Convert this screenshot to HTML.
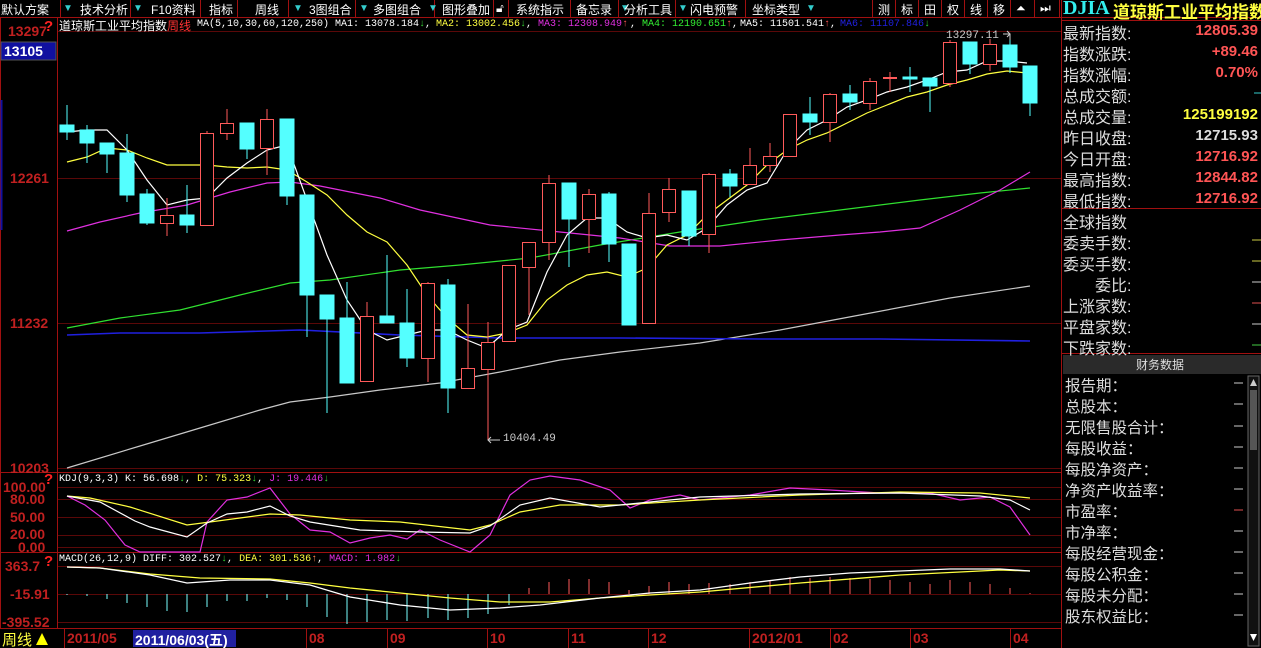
<!DOCTYPE html>
<html><head><meta charset="utf-8"><style>
html,body{margin:0;padding:0;background:#000;width:1261px;height:648px;overflow:hidden;position:relative;font-family:"Liberation Sans","Noto Sans CJK SC",sans-serif}
.a{position:absolute;white-space:nowrap}
.tb{font-size:12px;color:#fff;top:1px}
.tri{color:#3cc;font-size:10px;top:3px}
.rp{font-size:16px;color:#ddd;left:1063px}
.rv{font-size:15px;font-weight:bold;right:3px;text-align:right}
.fl{font-size:15.5px;color:#ddd;left:1065px}
.ax{font-size:14px;color:#c02020;font-weight:bold}
.mono{font-family:"Liberation Mono","Noto Sans CJK SC",monospace;font-size:10px}
</style></head><body>
<svg class="a" style="left:0;top:0" width="1261" height="648">
<!-- toolbar separators -->
<g stroke="#a01010" stroke-width="1">
<line x1="0" y1="17.5" x2="1261" y2="17.5"/>
<line x1="60.5" y1="0" x2="60.5" y2="17"/><line x1="130.5" y1="0" x2="130.5" y2="17"/><line x1="200.5" y1="0" x2="200.5" y2="17"/><line x1="237.5" y1="0" x2="237.5" y2="17"/><line x1="288.5" y1="0" x2="288.5" y2="17"/><line x1="355.5" y1="0" x2="355.5" y2="17"/><line x1="434.5" y1="0" x2="434.5" y2="17"/><line x1="493.5" y1="0" x2="493.5" y2="17"/><line x1="508.5" y1="0" x2="508.5" y2="17"/><line x1="570.5" y1="0" x2="570.5" y2="17"/><line x1="618.5" y1="0" x2="618.5" y2="17"/><line x1="675.5" y1="0" x2="675.5" y2="17"/><line x1="745.5" y1="0" x2="745.5" y2="17"/><line x1="872.5" y1="0" x2="872.5" y2="17"/><line x1="895.5" y1="0" x2="895.5" y2="17"/><line x1="918.5" y1="0" x2="918.5" y2="17"/><line x1="941.5" y1="0" x2="941.5" y2="17"/><line x1="964.5" y1="0" x2="964.5" y2="17"/><line x1="987.5" y1="0" x2="987.5" y2="17"/><line x1="1010.5" y1="0" x2="1010.5" y2="17"/><line x1="1034.5" y1="0" x2="1034.5" y2="17"/><line x1="1059.5" y1="0" x2="1059.5" y2="17"/>
</g>
<!-- frames -->
<g stroke="#a01010" fill="none">
<line x1="57.5" y1="18" x2="57.5" y2="628"/>
<line x1="0" y1="472.5" x2="1061" y2="472.5"/>
<line x1="0" y1="552.5" x2="1061" y2="552.5"/>
<line x1="0" y1="628.5" x2="1061" y2="628.5"/>
<line x1="1061.5" y1="0" x2="1061.5" y2="648"/>
<line x1="1062" y1="20.5" x2="1261" y2="20.5"/>
<line x1="1062" y1="208.5" x2="1261" y2="208.5"/>
<line x1="1062" y1="353.5" x2="1261" y2="353.5"/>
<line x1="0.5" y1="18" x2="0.5" y2="628"/>
</g>
<g stroke="#5a0808">
<line x1="58" y1="31.5" x2="1061" y2="31.5"/>
<line x1="58" y1="178.5" x2="1061" y2="178.5"/>
<line x1="58" y1="323.5" x2="1061" y2="323.5"/>
<line x1="58" y1="468.5" x2="1061" y2="468.5"/>
<line x1="58" y1="487.5" x2="1061" y2="487.5"/><line x1="58" y1="499.5" x2="1061" y2="499.5"/><line x1="58" y1="517.5" x2="1061" y2="517.5"/><line x1="58" y1="535.5" x2="1061" y2="535.5"/><line x1="58" y1="547.5" x2="1061" y2="547.5"/>
<line x1="58" y1="566.5" x2="1061" y2="566.5"/><line x1="58" y1="594.5" x2="1061" y2="594.5"/><line x1="58" y1="622.5" x2="1061" y2="622.5"/>
</g>
<rect x="1" y="42" width="55" height="18" fill="#1010a0" stroke="#555"/>
<line x1="1.5" y1="100" x2="1.5" y2="230" stroke="#1010a0" stroke-width="2"/>
<!-- MA lines -->
<g fill="none" stroke-width="1.2">
<polyline stroke="#c8c8c8" points="67,468 140,446 200,428 260,410 290,402 330,397 380,390 440,383 500,372 560,360 620,352 700,343 780,330 860,315 950,298 1030,286"/>
<polyline stroke="#2020e0" stroke-width="1.6" points="67,335 120,333 200,333 300,330 400,335 500,338 620,338 760,339 880,339 1030,341"/>
<polyline stroke="#30e030" points="67,328 120,318 180,310 240,295 290,283 330,280 400,270 460,265 530,258 600,245 680,232 760,220 840,210 920,200 980,193 1030,188"/>
<polyline stroke="#e030e0" points="67,231 100,222 140,213 187,205 230,192 267,183 290,182 320,186 380,198 420,210 490,225 560,232 620,238 670,246 720,246 780,240 840,235 880,232 920,228 960,210 1000,190 1030,172"/>
<polyline stroke="#ffff40" points="67,162 87,157 107,148 127,150 147,158 167,165 187,165 207,165 227,167 247,168 267,167 287,170 307,182 327,195 347,215 367,232 387,242 407,265 427,295 447,318 467,335 487,337 507,333 527,325 547,300 567,285 587,275 607,272 627,277 647,268 667,245 687,235 707,215 727,200 747,185 767,165 787,150 807,140 827,133 847,123 867,113 887,105 907,97 927,92 947,85 967,80 987,74 1007,71 1027,73"/>
<polyline stroke="#fff" points="67,132 87,130 107,130 127,150 147,180 167,205 187,200 207,198 227,178 247,163 267,150 287,145 307,200 327,255 347,300 367,330 387,340 407,335 427,330 447,330 467,340 487,348 507,330 527,322 547,272 567,235 587,218 607,218 627,232 647,238 667,235 687,240 707,228 727,205 747,190 767,183 787,150 807,130 827,120 847,107 867,100 887,92 907,87 927,80 947,72 967,70 987,61 1007,61 1027,63"/>
</g>
<!-- candles -->
<g id="c" fill="#54ffff" stroke="#54ffff">
<line x1="67" y1="105" x2="67" y2="140"/><rect x="60" y="125" width="14" height="7"/>
<line x1="87" y1="125" x2="87" y2="163"/><rect x="80" y="130" width="14" height="13"/>
<line x1="107" y1="143" x2="107" y2="173"/><rect x="100" y="143" width="14" height="11"/>
<line x1="127" y1="134" x2="127" y2="202"/><rect x="120" y="153" width="14" height="42"/>
<line x1="147" y1="189" x2="147" y2="225"/><rect x="140" y="194" width="14" height="29"/>
<line x1="187" y1="185" x2="187" y2="233"/><rect x="180" y="215" width="14" height="10"/>
<line x1="247" y1="123" x2="247" y2="159"/><rect x="240" y="123" width="14" height="26"/>
<line x1="287" y1="119" x2="287" y2="205"/><rect x="280" y="119" width="14" height="77"/>
<line x1="307" y1="195" x2="307" y2="337"/><rect x="300" y="195" width="14" height="100"/>
<line x1="327" y1="295" x2="327" y2="413"/><rect x="320" y="295" width="14" height="24"/>
<line x1="347" y1="282" x2="347" y2="383"/><rect x="340" y="318" width="14" height="65"/>
<line x1="387" y1="255" x2="387" y2="323"/><rect x="380" y="316" width="14" height="7"/>
<line x1="407" y1="289" x2="407" y2="367"/><rect x="400" y="323" width="14" height="35"/>
<line x1="448" y1="279" x2="448" y2="413"/><rect x="441" y="285" width="14" height="103"/>
<line x1="569" y1="183" x2="569" y2="267"/><rect x="562" y="183" width="14" height="36"/>
<line x1="609" y1="192" x2="609" y2="262"/><rect x="602" y="194" width="14" height="50"/>
<rect x="622" y="244" width="14" height="81"/>
<line x1="689" y1="191" x2="689" y2="246"/><rect x="682" y="191" width="14" height="45"/>
<line x1="730" y1="169" x2="730" y2="197"/><rect x="723" y="174" width="14" height="12"/>
<line x1="810" y1="97" x2="810" y2="135"/><rect x="803" y="114" width="14" height="8"/>
<line x1="850" y1="85" x2="850" y2="110"/><rect x="843" y="94" width="14" height="8"/>
<line x1="910" y1="67" x2="910" y2="92"/><rect x="903" y="77" width="14" height="2"/>
<line x1="930" y1="78" x2="930" y2="112"/><rect x="923" y="78" width="14" height="8"/>
<line x1="970" y1="42" x2="970" y2="74"/><rect x="963" y="42" width="14" height="22"/>
<line x1="1010" y1="35" x2="1010" y2="73"/><rect x="1003" y="45" width="14" height="22"/>
<line x1="1030" y1="66" x2="1030" y2="116"/><rect x="1023" y="66" width="14" height="37"/>
</g>
<g fill="#000" stroke="#ff5a5a">
<line x1="167" y1="198" x2="167" y2="236"/><rect x="160.5" y="215.5" width="13" height="8"/>
<line x1="207" y1="131" x2="207" y2="226"/><rect x="200.5" y="133.5" width="13" height="92"/>
<line x1="227" y1="109" x2="227" y2="140"/><rect x="220.5" y="123.5" width="13" height="10"/>
<line x1="267" y1="109" x2="267" y2="175"/><rect x="260.5" y="119.5" width="13" height="29"/>
<line x1="367" y1="302" x2="367" y2="382"/><rect x="360.5" y="316.5" width="13" height="65"/>
<line x1="428" y1="282" x2="428" y2="382"/><rect x="421.5" y="283.5" width="13" height="75"/>
<line x1="468" y1="304" x2="468" y2="388"/><rect x="461.5" y="368.5" width="13" height="20"/>
<line x1="488" y1="322" x2="488" y2="440"/><rect x="481.5" y="342.5" width="13" height="27"/>
<rect x="502.5" y="265.5" width="13" height="76"/>
<line x1="529" y1="242" x2="529" y2="315"/><rect x="522.5" y="242.5" width="13" height="25"/>
<line x1="549" y1="175" x2="549" y2="260"/><rect x="542.5" y="183.5" width="13" height="59"/>
<line x1="589" y1="189" x2="589" y2="253"/><rect x="582.5" y="194.5" width="13" height="25"/>
<line x1="649" y1="193" x2="649" y2="323"/><rect x="642.5" y="213.5" width="13" height="110"/>
<line x1="669" y1="178" x2="669" y2="222"/><rect x="662.5" y="189.5" width="13" height="23"/>
<line x1="709" y1="173" x2="709" y2="253"/><rect x="702.5" y="174.5" width="13" height="60"/>
<line x1="750" y1="148" x2="750" y2="184"/><rect x="743.5" y="165.5" width="13" height="19"/>
<line x1="770" y1="143" x2="770" y2="172"/><rect x="763.5" y="156.5" width="13" height="9"/>
<rect x="783.5" y="114.5" width="13" height="42"/>
<line x1="830" y1="93" x2="830" y2="142"/><rect x="823.5" y="94.5" width="13" height="28"/>
<line x1="870" y1="78" x2="870" y2="110"/><rect x="863.5" y="81.5" width="13" height="22"/>
<line x1="890" y1="72" x2="890" y2="92"/><line x1="883" y1="78" x2="897" y2="78" stroke-width="2"/>
<line x1="950" y1="40" x2="950" y2="87"/><rect x="943.5" y="42.5" width="13" height="41"/>
<line x1="990" y1="39" x2="990" y2="71"/><rect x="983.5" y="44.5" width="13" height="20"/>
</g>
<path d="M488 440 H500 M491 437 L488 440 L491 443" stroke="#ccc" fill="none"/>
<path d="M1003 34 H1010 V40 M1007 31 L1010 34 L1007 37" stroke="#ccc" fill="none"/>
<!-- KDJ -->
<g fill="none" stroke-width="1.2">
<polyline stroke="#e030e0" points="67,496 85,505 105,520 125,545 140,552 200,552 207,522 227,500 247,497 270,488 290,514 310,530 330,532 350,543 370,538 390,535 407,539 420,530 440,540 470,552 490,535 510,495 530,480 550,476 580,480 610,490 630,508 650,500 680,495 700,500 750,495 790,488 830,490 880,493 930,493 960,500 990,497 1010,507 1030,535"/>
<polyline stroke="#ffff40" points="67,496 90,498 130,507 187,525 210,522 270,514 300,515 350,520 400,522 470,530 490,525 520,512 560,505 620,505 700,500 800,495 900,492 980,493 1030,498"/>
<polyline stroke="#fff" points="67,496 100,502 135,521 150,527 187,537 207,523 227,514 247,512 270,506 290,516 310,522 360,530 420,532 470,533 490,526 520,505 550,498 600,507 650,502 700,497 800,494 900,493 980,496 1010,500 1030,510"/>
</g>
<!-- MACD -->
<g stroke="#7ff" stroke-width="1">
<line x1="67" y1="594" x2="67" y2="595"/><line x1="87" y1="594" x2="87" y2="596"/><line x1="107" y1="594" x2="107" y2="599"/><line x1="127" y1="594" x2="127" y2="603"/><line x1="147" y1="594" x2="147" y2="607"/><line x1="167" y1="594" x2="167" y2="611"/><line x1="187" y1="594" x2="187" y2="612"/><line x1="207" y1="594" x2="207" y2="607"/><line x1="227" y1="594" x2="227" y2="601"/><line x1="247" y1="594" x2="247" y2="601"/><line x1="267" y1="594" x2="267" y2="598"/><line x1="287" y1="594" x2="287" y2="600"/><line x1="307" y1="594" x2="307" y2="607"/><line x1="327" y1="594" x2="327" y2="617"/><line x1="347" y1="594" x2="347" y2="624"/><line x1="367" y1="594" x2="367" y2="622"/><line x1="387" y1="594" x2="387" y2="620"/><line x1="407" y1="594" x2="407" y2="621"/><line x1="428" y1="594" x2="428" y2="618"/><line x1="448" y1="594" x2="448" y2="620"/><line x1="468" y1="594" x2="468" y2="618"/><line x1="488" y1="594" x2="488" y2="614"/><line x1="509" y1="594" x2="509" y2="605"/>
</g>
<g stroke="#ff5a5a" stroke-width="1">
<line x1="529" y1="594" x2="529" y2="588"/><line x1="549" y1="594" x2="549" y2="582"/><line x1="569" y1="594" x2="569" y2="579"/><line x1="589" y1="594" x2="589" y2="579"/><line x1="609" y1="594" x2="609" y2="582"/><line x1="629" y1="594" x2="629" y2="590"/><line x1="649" y1="594" x2="649" y2="586"/><line x1="669" y1="594" x2="669" y2="582"/><line x1="689" y1="594" x2="689" y2="584"/><line x1="709" y1="594" x2="709" y2="583"/><line x1="730" y1="594" x2="730" y2="584"/><line x1="750" y1="594" x2="750" y2="582"/><line x1="770" y1="594" x2="770" y2="580"/><line x1="790" y1="594" x2="790" y2="577"/><line x1="810" y1="594" x2="810" y2="578"/><line x1="830" y1="594" x2="830" y2="577"/><line x1="850" y1="594" x2="850" y2="578"/><line x1="870" y1="594" x2="870" y2="579"/><line x1="890" y1="594" x2="890" y2="580"/><line x1="910" y1="594" x2="910" y2="582"/><line x1="930" y1="594" x2="930" y2="584"/><line x1="950" y1="594" x2="950" y2="580"/><line x1="970" y1="594" x2="970" y2="582"/><line x1="990" y1="594" x2="990" y2="584"/><line x1="1010" y1="594" x2="1010" y2="588"/><line x1="1030" y1="594" x2="1030" y2="593"/>
</g>
<g fill="none" stroke-width="1.3">
<polyline stroke="#ffff40" points="67,567 100,568 150,574 200,578 270,579 310,583 350,588 400,593 450,598 500,602 550,602 600,598 700,592 800,583 900,575 1000,570 1030,571"/>
<polyline stroke="#fff" points="67,567 100,568 150,575 187,583 230,580 270,580 310,585 350,597 400,605 450,610 500,608 540,605 600,598 650,593 700,590 750,583 800,577 850,573 900,571 950,569 1000,569 1030,571"/>
</g>
<!-- bottom bar -->
<g stroke="#a01010"><line x1="64.5" y1="629" x2="64.5" y2="648"/><line x1="306.5" y1="629" x2="306.5" y2="648"/><line x1="387.5" y1="629" x2="387.5" y2="648"/><line x1="487.5" y1="629" x2="487.5" y2="648"/><line x1="568.5" y1="629" x2="568.5" y2="648"/><line x1="648.5" y1="629" x2="648.5" y2="648"/><line x1="749.5" y1="629" x2="749.5" y2="648"/><line x1="830.5" y1="629" x2="830.5" y2="648"/><line x1="910.5" y1="629" x2="910.5" y2="648"/><line x1="1010.5" y1="629" x2="1010.5" y2="648"/></g>
<rect x="133" y="630" width="103" height="17" fill="#2020a0"/>
<polygon points="36,645 42,633 48,645" fill="#ffff00"/>
<!-- right panel -->
<rect x="1063" y="355" width="198" height="19" fill="#2a2a2a"/>
<rect x="1248" y="376" width="11" height="270" fill="#111" stroke="#666"/>
<rect x="1250" y="390" width="7" height="60" fill="#555"/>
<polygon points="1250,386 1253.5,379 1257,386" fill="#ccc"/>
<polygon points="1250,634 1253.5,641 1257,634" fill="#fff"/>
<g stroke="#ccc"><line x1="1234" y1="383" x2="1243" y2="383"/><line x1="1234" y1="404" x2="1243" y2="404"/><line x1="1234" y1="426" x2="1243" y2="426"/><line x1="1234" y1="447" x2="1243" y2="447"/><line x1="1234" y1="468" x2="1243" y2="468"/><line x1="1234" y1="489" x2="1243" y2="489"/><line x1="1234" y1="531" x2="1243" y2="531"/><line x1="1234" y1="552" x2="1243" y2="552"/><line x1="1234" y1="573" x2="1243" y2="573"/><line x1="1234" y1="594" x2="1243" y2="594"/><line x1="1234" y1="615" x2="1243" y2="615"/></g>
<line x1="1234" y1="510" x2="1243" y2="510" stroke="#e05050"/>
<g stroke-width="1"><line x1="1252" y1="240" x2="1261" y2="240" stroke="#cc4"/><line x1="1252" y1="261" x2="1261" y2="261" stroke="#cc4"/><line x1="1252" y1="282" x2="1261" y2="282" stroke="#ccc"/><line x1="1252" y1="303" x2="1261" y2="303" stroke="#e05050"/><line x1="1252" y1="324" x2="1261" y2="324" stroke="#ccc"/><line x1="1252" y1="345" x2="1261" y2="345" stroke="#4c4"/><line x1="1254" y1="93" x2="1261" y2="93" stroke="#3cc"/></g>
</svg>

<!-- toolbar text -->
<span class="a tb" style="left:1px">默认方案</span>
<span class="a tri" style="left:63px">▼</span>
<span class="a tb" style="left:80px">技术分析</span>
<span class="a tri" style="left:133px">▼</span>
<span class="a tb" style="left:151px">F10资料</span>
<span class="a tb" style="left:209px">指标</span>
<span class="a tb" style="left:255px">周线</span>
<span class="a tri" style="left:293px">▼</span>
<span class="a tb" style="left:309px">3图组合</span>
<span class="a tri" style="left:359px">▼</span>
<span class="a tb" style="left:373px">多图组合</span>
<span class="a tri" style="left:428px">▼</span>
<span class="a tb" style="left:442px">图形叠加</span>
<span class="a tb" style="left:496px">🔓︎</span>
<span class="a tb" style="left:516px">系统指示</span>
<span class="a tb" style="left:576px">备忘录</span>
<span class="a tri" style="left:620px">▼</span>
<span class="a tb" style="left:624px">分析工具</span>
<span class="a tri" style="left:678px">▼</span>
<span class="a tb" style="left:690px">闪电预警</span>
<span class="a tb" style="left:752px">坐标类型</span>
<span class="a tri" style="left:806px">▼</span>
<span class="a tb" style="left:878px">测</span><span class="a tb" style="left:901px">标</span><span class="a tb" style="left:924px">田</span><span class="a tb" style="left:947px">权</span><span class="a tb" style="left:970px">线</span><span class="a tb" style="left:993px">移</span><span class="a tb" style="left:1016px">⏶</span><span class="a tb" style="left:1040px">⏭</span>
<span class="a" style="left:1063px;top:-3px;font-family:'Liberation Serif',serif;font-weight:bold;font-size:20px;color:#3ee">DJIA</span>
<span class="a" style="left:1113px;top:-2px;font-size:17px;font-weight:bold;color:#ffff40">道琼斯工业平均指数</span>

<!-- chart header -->
<span class="a" style="left:59px;top:17px;font-size:12px;color:#fff">道琼斯工业平均指数<span style="color:#f33">周线</span></span>
<span class="a mono" style="left:197px;top:19px;color:#fff">MA(5,10,30,60,120,250)</span>
<span class="a mono" style="left:335px;top:19px;color:#fff">MA1: 13078.184<span style="color:#3c3">↓</span>,</span>
<span class="a mono" style="left:436px;top:19px;color:#ffff40">MA2: 13002.456<span style="color:#3c3">↓</span><span style="color:#fff">,</span></span>
<span class="a mono" style="left:538px;top:19px;color:#e030e0">MA3: 12308.949<span style="color:#f55">↑</span></span>
<span class="a mono" style="left:630px;top:19px;color:#3e3"><span style="color:#fff">,</span> MA4: 12190.651<span style="color:#f55">↑</span><span style="color:#fff">,</span></span>
<span class="a mono" style="left:740px;top:19px;color:#fff">MA5: 11501.541<span style="color:#f55">↑</span>,</span>
<span class="a mono" style="left:840px;top:19px;color:#2020e0">MA6: 11107.846<span style="color:#3c3">↓</span></span>
<span class="a mono" style="left:946px;top:30px;color:#ccc;font-size:11px">13297.11</span>
<span class="a mono" style="left:503px;top:433px;color:#ccc;font-size:11px">10404.49</span>

<!-- left axis -->
<span class="a ax" style="left:8px;top:23px">13297</span>
<span class="a" style="left:44px;top:18px;color:#f22;font-weight:bold;font-size:15px">?</span>
<span class="a" style="left:4px;top:43px;font-size:14px;font-weight:bold;color:#fff">13105</span>
<span class="a ax" style="left:10px;top:170px">12261</span>
<span class="a ax" style="left:10px;top:315px">11232</span>
<span class="a ax" style="left:10px;top:460px">10203</span>
<span class="a ax" style="left:3px;top:479px">100.00</span>
<span class="a" style="left:44px;top:471px;color:#f22;font-weight:bold;font-size:15px">?</span>
<span class="a ax" style="left:10px;top:491px">80.00</span>
<span class="a ax" style="left:10px;top:509px">50.00</span>
<span class="a ax" style="left:10px;top:526px">20.00</span>
<span class="a ax" style="left:18px;top:539px">0.00</span>
<span class="a ax" style="left:5px;top:558px">363.7</span>
<span class="a" style="left:44px;top:553px;color:#f22;font-weight:bold;font-size:15px">?</span>
<span class="a ax" style="left:10px;top:586px">-15.91</span>
<span class="a ax" style="left:2px;top:614px">-395.52</span>

<!-- indicator headers -->
<span class="a mono" style="left:59px;top:474px;color:#fff">KDJ(9,3,3) K: 56.698<span style="color:#3c3">↓</span>, <span style="color:#ffff40">D: 75.323</span><span style="color:#3c3">↓</span>, <span style="color:#e030e0">J: 19.446</span><span style="color:#3c3">↓</span></span>
<span class="a mono" style="left:59px;top:554px;color:#fff">MACD(26,12,9) DIFF: 302.527<span style="color:#3c3">↓</span>, <span style="color:#ffff40">DEA: 301.536</span><span style="color:#f85">↑</span>, <span style="color:#e030e0">MACD: 1.982</span><span style="color:#3c3">↓</span></span>

<!-- bottom -->
<span class="a" style="left:2px;top:629px;font-size:15px;color:#ffff40">周线</span>
<span class="a ax" style="left:67px;top:630px">2011/05</span>
<span class="a" style="left:135px;top:630px;font-size:14px;font-weight:bold;color:#fff">2011/06/03(五)</span>
<span class="a ax" style="left:309px;top:630px">08</span>
<span class="a ax" style="left:390px;top:630px">09</span>
<span class="a ax" style="left:490px;top:630px">10</span>
<span class="a ax" style="left:571px;top:630px">11</span>
<span class="a ax" style="left:651px;top:630px">12</span>
<span class="a ax" style="left:752px;top:630px">2012/01</span>
<span class="a ax" style="left:833px;top:630px">02</span>
<span class="a ax" style="left:913px;top:630px">03</span>
<span class="a ax" style="left:1013px;top:630px">04</span>

<!-- right panel rows -->
<span class="a rp" style="top:20px">最新指数:</span><span class="a rv" style="top:22px;color:#f55">12805.39</span>
<span class="a rp" style="top:41px">指数涨跌:</span><span class="a rv" style="top:43px;color:#f55">+89.46</span>
<span class="a rp" style="top:62px">指数涨幅:</span><span class="a rv" style="top:64px;color:#f55">0.70%</span>
<span class="a rp" style="top:83px">总成交额:</span>
<span class="a rp" style="top:104px">总成交量:</span><span class="a rv" style="top:106px;color:#ffff40">125199192</span>
<span class="a rp" style="top:125px">昨日收盘:</span><span class="a rv" style="top:127px;color:#ddd">12715.93</span>
<span class="a rp" style="top:146px">今日开盘:</span><span class="a rv" style="top:148px;color:#f55">12716.92</span>
<span class="a rp" style="top:167px">最高指数:</span><span class="a rv" style="top:169px;color:#f55">12844.82</span>
<span class="a rp" style="top:188px">最低指数:</span><span class="a rv" style="top:190px;color:#f55">12716.92</span>
<span class="a rp" style="top:209px">全球指数</span>
<span class="a rp" style="top:230px">委卖手数:</span>
<span class="a rp" style="top:251px">委买手数:</span>
<span class="a rp" style="top:272px;left:1095px">委比:</span>
<span class="a rp" style="top:293px">上涨家数:</span>
<span class="a rp" style="top:314px">平盘家数:</span>
<span class="a rp" style="top:335px">下跌家数:</span>
<span class="a" style="left:1136px;top:356px;font-size:12px;color:#ddd">财务数据</span>
<span class="a fl" style="top:374px">报告期：</span>
<span class="a fl" style="top:395px">总股本：</span>
<span class="a fl" style="top:416px">无限售股合计：</span>
<span class="a fl" style="top:437px">每股收益：</span>
<span class="a fl" style="top:458px">每股净资产：</span>
<span class="a fl" style="top:479px">净资产收益率：</span>
<span class="a fl" style="top:500px">市盈率：</span>
<span class="a fl" style="top:521px">市净率：</span>
<span class="a fl" style="top:542px">每股经营现金：</span>
<span class="a fl" style="top:563px">每股公积金：</span>
<span class="a fl" style="top:584px">每股未分配：</span>
<span class="a fl" style="top:605px">股东权益比：</span>
</body></html>
